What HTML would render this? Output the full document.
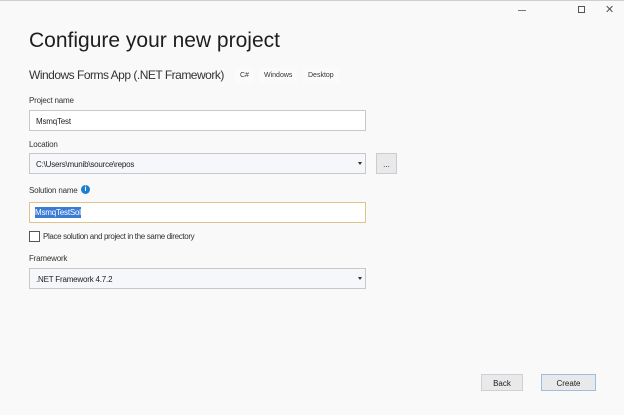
<!DOCTYPE html>
<html><head><style>
*{margin:0;padding:0;box-sizing:border-box}
body{width:624px;height:415px;background:#f9f9fa;font-family:"Liberation Sans",sans-serif;color:#1e1e1e;position:relative;overflow:hidden;border-top:1px solid #cfcfcf}
.a{position:absolute;white-space:nowrap}
.lbl{font-size:8px;color:#333;letter-spacing:-0.2px}
.in{position:absolute;left:29px;width:337px;height:21px;background:#fff;border:1px solid #c8c8c8;font-size:8px;padding:6px 0 0 6px;color:#222;letter-spacing:-0.2px}
.sel{background:#f6f7fb}
.arr{position:absolute;right:3px;top:8px;width:0;height:0;border-left:2px solid transparent;border-right:2px solid transparent;border-top:3px solid #333}
.tag{position:absolute;top:67px;height:15px;font-size:7px;color:#333;background:#fbfbfb;padding:4px 5px 0}
.btn{position:absolute;top:373px;height:17px;background:#e9e9eb;border:1px solid #d0d0d0;font-size:8px;text-align:center;padding-top:4px}
</style></head><body>
<div class="a" style="left:518px;top:9px;width:8px;height:1px;background:#777"></div>
<div class="a" style="left:578px;top:5px;width:7px;height:7px;border:1px solid #555"></div>
<div class="a" style="left:605px;top:2px;font-size:11px;color:#555">✕</div>
<div class="a" style="left:29px;top:28px;font-size:21px;color:#1e1e1e">Configure your new project</div>
<div class="a" style="left:29px;top:67px;font-size:12px;letter-spacing:-0.5px;color:#333">Windows Forms App (.NET Framework)</div>
<div class="tag" style="left:235px">C#</div>
<div class="tag" style="left:259px">Windows</div>
<div class="tag" style="left:303px">Desktop</div>
<div class="a lbl" style="left:29px;top:95px">Project name</div>
<div class="in" style="top:109px">MsmqTest</div>
<div class="a lbl" style="left:29px;top:139px">Location</div>
<div class="in sel" style="top:152px">C:\Users\munib\source\repos<div class="arr"></div></div>
<div class="a" style="left:376px;top:152px;width:21px;height:21px;background:#e9e9eb;border:1px solid #ccc;font-size:8px;text-align:center;padding-top:6px">...</div>
<div class="a lbl" style="left:29px;top:185px">Solution name</div>
<div class="a" style="left:81px;top:184px;width:9px;height:9px;border-radius:50%;background:#1a7fd0;color:#fff;font-size:7px;font-weight:bold;text-align:center;line-height:9px">i</div>
<div class="in" style="top:201px;border-color:#dcc48a;padding:5px 0 0 5px"><span style="background:#3a7bd5;color:#fff;padding:1px 0">MsmqTestSol</span></div>
<div class="a" style="left:29px;top:230px;width:11px;height:11px;border:1px solid #555;background:#fff"></div>
<div class="a lbl" style="left:43px;top:231px;letter-spacing:-0.35px">Place solution and project in the same directory</div>
<div class="a lbl" style="left:29px;top:253px">Framework</div>
<div class="in sel" style="top:267px">.NET Framework 4.7.2<div class="arr"></div></div>
<div class="btn" style="left:481px;width:42px">Back</div>
<div class="btn" style="left:541px;width:55px;border-color:#9ac0e0">Create</div>
</body></html>
